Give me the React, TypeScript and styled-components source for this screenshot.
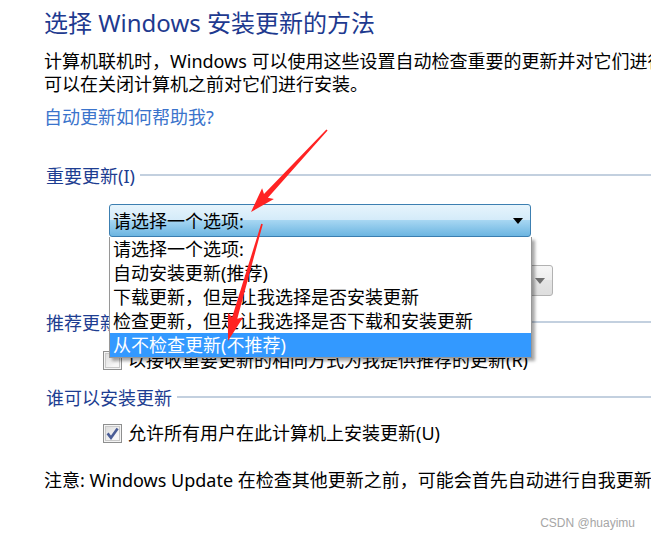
import React from 'react';
import styled, { createGlobalStyle } from 'styled-components';

const GlobalStyle = createGlobalStyle`
    html, body {
        margin: 0;
        padding: 0;
        background: #fff;
    }
`;

const Page = styled.div`
    position: relative;
    width: 651px;
    height: 540px;
    overflow: hidden;
    box-sizing: border-box;
    padding: 7px 0 0 44px;
    background: #fff;
    color: #000;
    font-family: "Noto Sans", "Noto Sans CJK SC", sans-serif;
    font-size: 18px;
    line-height: 24px;
    white-space: nowrap;
`;

const Title = styled.h1`
    margin: 0;
    font-size: 24px;
    line-height: 32px;
    font-weight: 400;
    color: #1e3a8f;
`;

const Description = styled.p`
    margin: 11px 0 0;
    line-height: 23px;
`;

const HelpLink = styled.a`
    display: block;
    margin-top: 9px;
    color: #3b74cc;
    text-decoration: none;
`;

const Group = styled.section<{ $gap: number }>`
    margin-top: ${p => p.$gap}px;
`;

const GroupHeader = styled.div`
    display: flex;
    align-items: center;
    padding-left: 2px;
    color: #1d3d91;

    &::after {
        content: '';
        flex: 1;
        height: 2px;
        margin: -2px 0 0 5px;
        background: #c3d0df;
    }
`;

const ComboBox = styled.div<{ $open?: boolean; $width: number; $height: number; $gap: number }>`
    position: relative;
    box-sizing: border-box;
    display: flex;
    align-items: center;
    width: ${p => p.$width}px;
    height: ${p => p.$height}px;
    margin: ${p => p.$gap}px 0 0 65px;
    padding: 0 7px 0 3px;
    border: 1px solid ${p => (p.$open ? '#3c7fb1' : '#b2b2b2')};
    border-radius: 3px;
    background: ${p =>
        p.$open
            ? 'linear-gradient(#e6f4fc 0%, #d4ebf9 48%, #a6d6f2 50%, #6cb5e1 100%)'
            : 'linear-gradient(#f6f6f6 0%, #ededed 50%, #e4e4e4 50%, #dedede 100%)'};
`;

const ComboArrow = styled.span<{ $muted?: boolean }>`
    margin-left: auto;
    width: 0;
    height: 0;
    border-left: 5.5px solid transparent;
    border-right: 5.5px solid transparent;
    border-top: 6px solid ${p => (p.$muted ? '#6f6f6f' : '#000')};
`;

const DropList = styled.ul`
    position: absolute;
    z-index: 2;
    top: calc(100% + 1px);
    left: -1px;
    box-sizing: border-box;
    width: 423px;
    margin: 0;
    padding: 0;
    list-style: none;
    background: #fff;
    border: 1px solid #979797;
    border-top: none;
    box-shadow: 3px 3px 3px rgba(0, 0, 0, 0.35);
`;

const DropItem = styled.li<{ $selected?: boolean }>`
    height: 24px;
    padding-left: 3px;
    line-height: 24px;
    color: ${p => (p.$selected ? '#fff' : '#000')};
    background: ${p => (p.$selected ? '#3399ff' : 'transparent')};
`;

const CheckRow = styled.label<{ $gap: number }>`
    display: flex;
    align-items: center;
    gap: 6px;
    margin: ${p => p.$gap}px 0 0 59px;
`;

const CheckBox = styled.span`
    position: relative;
    box-sizing: border-box;
    flex: none;
    width: 19px;
    height: 19px;
    border: 1px solid #8e8f8f;
    background: linear-gradient(135deg, #d8d8d8, #f7f7f7 70%);
    box-shadow: inset 0 0 0 1px #f4f4f4, inset 0 0 0 2px #c9c9c9;

    svg {
        position: absolute;
        left: 1px;
        top: 1px;
    }
`;

const Note = styled.p`
    margin: 23px 0 0;
`;

const Watermark = styled.div`
    position: absolute;
    right: 16px;
    top: 516px;
    font-family: "Liberation Sans", Arial, sans-serif;
    font-size: 12px;
    line-height: 14px;
    color: #a6a6a6;
`;

const Annotation = styled.svg`
    position: absolute;
    z-index: 5;
    left: 0;
    top: 0;
    pointer-events: none;
`;

const arrowPoints = (x1: number, y1: number, x2: number, y2: number, headLen = 22, headHalf = 8) => {
    const dx = x2 - x1;
    const dy = y2 - y1;
    const len = Math.hypot(dx, dy);
    const ux = dx / len;
    const uy = dy / len;
    const nx = -uy;
    const ny = ux;
    const tail = 0.8;
    const neck = 2.7;
    const bx = x2 - ux * headLen;
    const by = y2 - uy * headLen;
    const wx = x2 - ux * (headLen + 3);
    const wy = y2 - uy * (headLen + 3);
    const pts = [
        [x1 + nx * tail, y1 + ny * tail],
        [bx + nx * neck, by + ny * neck],
        [wx + nx * headHalf, wy + ny * headHalf],
        [x2, y2],
        [wx - nx * headHalf, wy - ny * headHalf],
        [bx - nx * neck, by - ny * neck],
        [x1 - nx * tail, y1 - ny * tail],
    ];
    return pts.map(p => p.map(v => v.toFixed(1)).join(',')).join(' ');
};

const options = [
    '请选择一个选项:',
    '自动安装更新(推荐)',
    '下载更新，但是让我选择是否安装更新',
    '检查更新，但是让我选择是否下载和安装更新',
    '从不检查更新(不推荐)',
];

const Check = () => (
    <svg width={15} height={15} viewBox="0 0 15 15">
        <path d="M2.6 7.4 L6 11.8 L12.6 2.6" fill="none" stroke="#4a5d96" strokeWidth={2.6} />
    </svg>
);

const App = () => (
    <Page>
        <GlobalStyle />
        <Title>选择 Windows 安装更新的方法</Title>
        <Description>
            计算机联机时，Windows 可以使用这些设置自动检查重要的更新并对它们进行安装。这些更新可用时，您也
            <br />
            可以在关闭计算机之前对它们进行安装。
        </Description>
        <HelpLink href="#">自动更新如何帮助我?</HelpLink>

        <Group $gap={35}>
            <GroupHeader>重要更新(I)</GroupHeader>
            <ComboBox $open $width={422} $height={33} $gap={16}>
                请选择一个选项:
                <ComboArrow />
                <DropList>
                    {options.map((option, i) => (
                        <DropItem key={option} $selected={i === options.length - 1}>
                            {option}
                        </DropItem>
                    ))}
                </DropList>
            </ComboBox>
            <ComboBox $width={444} $height={31} $gap={28}>
                <ComboArrow $muted />
            </ComboBox>
        </Group>

        <Group $gap={15}>
            <GroupHeader>推荐更新</GroupHeader>
            <CheckRow $gap={13}>
                <CheckBox />
                以接收重要更新的相同方式为我提供推荐的更新(R)
            </CheckRow>
        </Group>

        <Group $gap={14}>
            <GroupHeader>谁可以安装更新</GroupHeader>
            <CheckRow $gap={11}>
                <CheckBox>
                    <Check />
                </CheckBox>
                允许所有用户在此计算机上安装更新(U)
            </CheckRow>
        </Group>

        <Note>注意: Windows Update 在检查其他更新之前，可能会首先自动进行自我更新。</Note>

        <Watermark>CSDN @huayimu</Watermark>

        <Annotation width={651} height={540} viewBox="0 0 651 540">
            <polygon points={arrowPoints(327, 130, 251, 212)} fill="#ff2323" />
            <polygon points={arrowPoints(262, 224, 228, 341, 24, 8)} fill="#ff2323" />
        </Annotation>
    </Page>
);

export default App;
